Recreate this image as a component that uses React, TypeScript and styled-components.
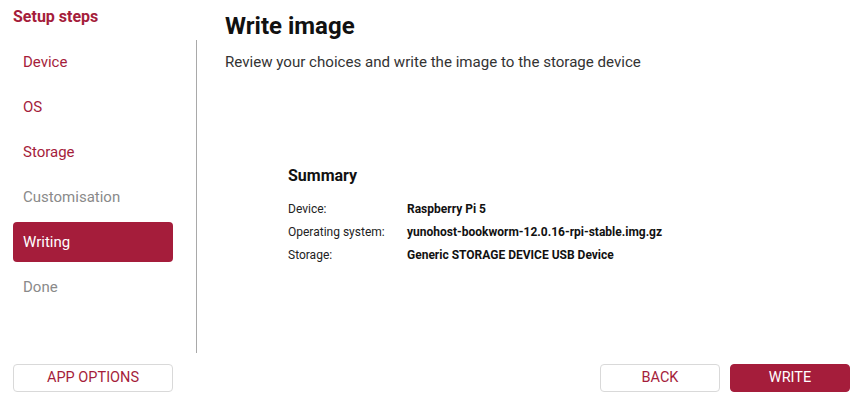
import React from "react";
import styled, { createGlobalStyle } from "styled-components";

const CRIMSON = "#a51d3b";

const Global = createGlobalStyle`
  html, body { margin: 0; padding: 0; background: #ffffff; }
  body { font-family: Roboto, "Liberation Sans", sans-serif; }
  * { box-sizing: border-box; }
`;

const Page = styled.div`
  width: 860px;
  height: 397px;
  display: grid;
  grid-template-columns: 196px 1px 1fr;
  grid-template-rows: 40px 313px 44px;
  background: #fff;
`;

const SidebarTitle = styled.div`
  grid-column: 1;
  grid-row: 1;
  padding: 8px 0 0 13px;
  font-size: 16px;
  font-weight: 700;
  line-height: 18px;
  color: ${CRIMSON};
`;

const StepList = styled.ul`
  grid-column: 1;
  grid-row: 2;
  list-style: none;
  margin: 0;
  padding: 2px 23px 0 13px;
  display: flex;
  flex-direction: column;
  gap: 5px;
`;

const Step = styled.li<{ $state: "done" | "active" | "pending" }>`
  height: 40px;
  display: flex;
  align-items: center;
  padding-left: 10px;
  border-radius: 4px;
  font-size: 15px;
  color: ${(p) => (p.$state === "active" ? "#fff" : p.$state === "done" ? CRIMSON : "#8a8a8a")};
  background: ${(p) => (p.$state === "active" ? CRIMSON : "transparent")};
`;

const Divider = styled.div`
  grid-column: 2;
  grid-row: 2;
  background: #a9a9a9;
`;

const Main = styled.main`
  grid-column: 3;
  grid-row: 1 / span 2;
  padding: 12px 0 0 28px;
  display: flex;
  flex-direction: column;
`;

const Title = styled.h1`
  margin: 0;
  font-size: 24px;
  font-weight: 700;
  line-height: 28px;
  color: #111;
`;

const Subtitle = styled.p`
  margin: 13px 0 0;
  font-size: 15.1px;
  line-height: 18px;
  color: #333;
`;

const Summary = styled.section`
  margin: 95px 0 0 63px;
`;

const SummaryTitle = styled.h2`
  margin: 0;
  font-size: 16px;
  font-weight: 700;
  line-height: 20px;
  color: #111;
`;

const SummaryGrid = styled.dl`
  margin: 16px 0 0;
  display: grid;
  grid-template-columns: 119px auto;
  row-gap: 8px;
  font-size: 12px;
  line-height: 15px;
  color: #222;
`;

const Label = styled.dt`
  margin: 0;
`;

const Value = styled.dd`
  margin: 0;
  font-weight: 700;
  color: #111;
`;

const FooterLeft = styled.div`
  grid-column: 1;
  grid-row: 3;
  padding: 11px 23px 0 13px;
`;

const FooterRight = styled.div`
  grid-column: 3;
  grid-row: 3;
  padding: 11px 10px 0 0;
  display: flex;
  justify-content: flex-end;
  gap: 10px;
`;

const Button = styled.button<{ $primary?: boolean; $width?: number }>`
  width: ${(p) => (p.$width ? `${p.$width}px` : "100%")};
  height: 28px;
  border-radius: 4px;
  border: 1px solid ${(p) => (p.$primary ? CRIMSON : "#d9d9d9")};
  background: ${(p) => (p.$primary ? CRIMSON : "#fff")};
  color: ${(p) => (p.$primary ? "#fff" : CRIMSON)};
  font-family: Roboto, "Liberation Sans", sans-serif;
  font-size: 14.5px;
  line-height: 16px;
  padding: 0;
  cursor: pointer;
`;

const steps: { name: string; state: "done" | "active" | "pending" }[] = [
  { name: "Device", state: "done" },
  { name: "OS", state: "done" },
  { name: "Storage", state: "done" },
  { name: "Customisation", state: "pending" },
  { name: "Writing", state: "active" },
  { name: "Done", state: "pending" },
];

const summary = [
  ["Device:", "Raspberry Pi 5"],
  ["Operating system:", "yunohost-bookworm-12.0.16-rpi-stable.img.gz"],
  ["Storage:", "Generic STORAGE DEVICE USB Device"],
];

export default function App() {
  return (
    <>
      <Global />
      <Page>
        <SidebarTitle>Setup steps</SidebarTitle>
        <StepList>
          {steps.map((s) => (
            <Step key={s.name} $state={s.state}>
              {s.name}
            </Step>
          ))}
        </StepList>
        <Divider />
        <Main>
          <Title>Write image</Title>
          <Subtitle>Review your choices and write the image to the storage device</Subtitle>
          <Summary>
            <SummaryTitle>Summary</SummaryTitle>
            <SummaryGrid>
              {summary.map(([k, v]) => (
                <React.Fragment key={k}>
                  <Label>{k}</Label>
                  <Value>{v}</Value>
                </React.Fragment>
              ))}
            </SummaryGrid>
          </Summary>
        </Main>
        <FooterLeft>
          <Button>APP OPTIONS</Button>
        </FooterLeft>
        <FooterRight>
          <Button $width={120}>BACK</Button>
          <Button $primary $width={120}>WRITE</Button>
        </FooterRight>
      </Page>
    </>
  );
}
